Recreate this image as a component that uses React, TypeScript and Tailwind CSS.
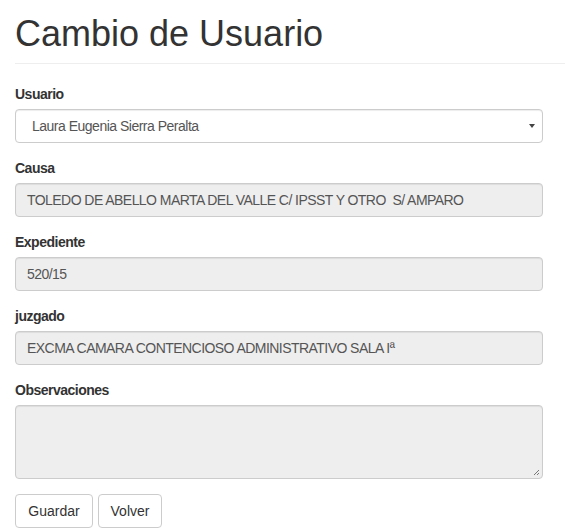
import React from 'react';

const font = { fontFamily: '"Liberation Sans", Arial, Helvetica, sans-serif' };

const Label = ({ children }: { children: React.ReactNode }) => (
  <label className="block mb-[5px] text-[14px] leading-[20px] font-bold text-[#333] tracking-[-0.5px]">{children}</label>
);

const ReadOnly = ({ value }: { value: string }) => (
  <div className="h-[34px] px-[11px] py-[6px] text-[14px] leading-[20px] text-[#555] tracking-[-0.55px] bg-[#eee] border border-[#ccc] rounded-[4px] shadow-[inset_0_1px_1px_rgba(0,0,0,0.075)] whitespace-pre overflow-hidden">
    {value}
  </div>
);

export default function App() {
  return (
    <div className="bg-white w-[565px] h-[529px] overflow-hidden pl-[15px]" style={font}>
      <div className="pt-[14px] pb-[9px] border-b border-[#eee] mb-[20px]">
        <h1 className="text-[36px] leading-[1.1] text-[#333] font-normal">Cambio de Usuario</h1>
      </div>
      <form className="w-[528px]">
        <div className="mb-[15px]">
          <Label>Usuario</Label>
          <div className="relative h-[34px] pl-[16px] pr-[12px] py-[6px] text-[14px] leading-[20px] text-[#555] tracking-[-0.5px] bg-white border border-[#ccc] rounded-[4px] shadow-[inset_0_1px_1px_rgba(0,0,0,0.075)]">
            Laura Eugenia Sierra Peralta
            <svg className="absolute right-[7px] top-[13px]" width="6" height="6" viewBox="0 0 6 6">
              <path d="M0 1 L6 1 L3 5 Z" fill="#444" />
            </svg>
          </div>
        </div>
        <div className="mb-[15px]">
          <Label>Causa</Label>
          <ReadOnly value="TOLEDO DE ABELLO MARTA DEL VALLE C/ IPSST Y OTRO  S/ AMPARO" />
        </div>
        <div className="mb-[15px]">
          <Label>Expediente</Label>
          <ReadOnly value="520/15" />
        </div>
        <div className="mb-[15px]">
          <Label>juzgado</Label>
          <ReadOnly value="EXCMA CAMARA CONTENCIOSO ADMINISTRATIVO SALA Iª" />
        </div>
        <div className="mb-[15px]">
          <Label>Observaciones</Label>
          <div className="relative h-[74px] bg-[#eee] border border-[#ccc] rounded-[4px] shadow-[inset_0_1px_1px_rgba(0,0,0,0.075)]">
            <svg className="absolute right-[2px] bottom-[2px]" width="7" height="7" viewBox="0 0 7 7">
              <path d="M1 6 L6 1 M4 6 L6 4" stroke="#777" strokeWidth="1" />
            </svg>
          </div>
        </div>
        <div className="flex gap-[5px]">
          <button type="button" className="w-[78px] h-[34px] py-[6px] text-[14px] leading-[20px] text-[#333] bg-white border border-[#ccc] rounded-[4px] text-center">
            Guardar
          </button>
          <button type="button" className="w-[64px] h-[34px] py-[6px] text-[14px] leading-[20px] text-[#333] bg-white border border-[#ccc] rounded-[4px] text-center">
            Volver
          </button>
        </div>
      </form>
    </div>
  );
}
